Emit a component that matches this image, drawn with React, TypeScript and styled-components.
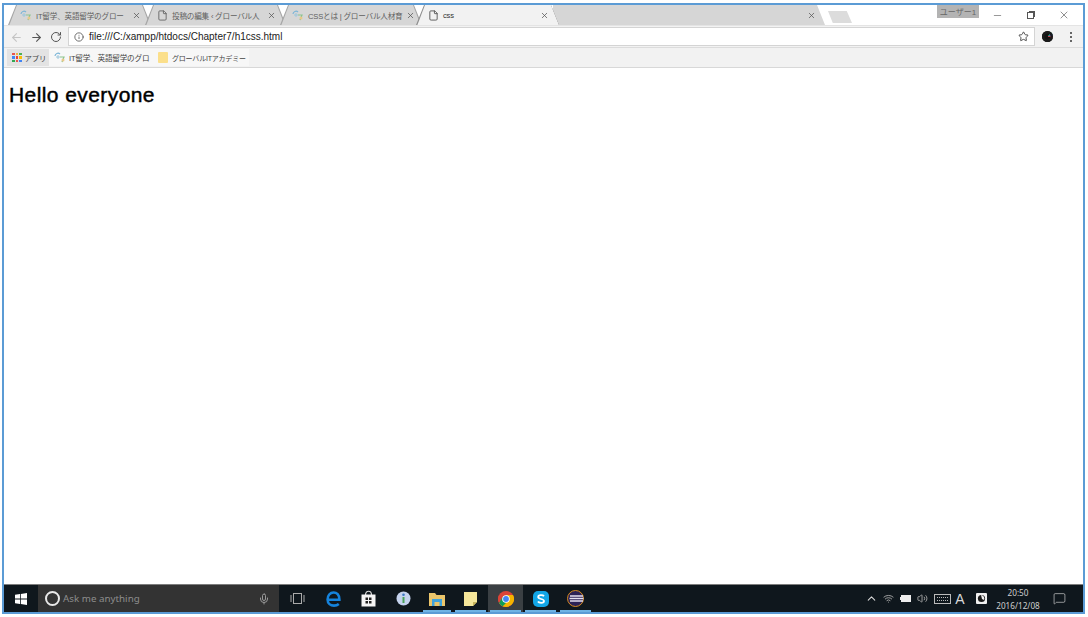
import React from 'react';
import styled, { createGlobalStyle } from 'styled-components';
import { ArrowLeft, ArrowRight, RotateCw, Info, Star, X, Minus, File, Mic, ChevronUp, Wifi, Volume2, MessageSquare } from 'lucide-react';

const Global = createGlobalStyle`
  html, body { margin: 0; padding: 0; background: #fff; }
  body { width: 1088px; height: 617px; overflow: hidden; font-family: "Liberation Sans", "Noto Sans CJK JP", sans-serif; }
`;

const Frame = styled.div`
  box-sizing: border-box;
  width: 1083px;
  height: 611px;
  margin: 3px 0 0 2px;
  border: 2px solid #5b9bd5;
  display: flex;
  flex-direction: column;
  background: #fff;
`;

const TabStrip = styled.div`
  height: 20px;
  flex: none;
  display: flex;
  align-items: flex-end;
  background: #fff;
  padding-left: 4px;
  position: relative;
`;

// outer shape gives the slanted edge line, ::before is the tab fill
const Tab = styled.div<{ $w: number; $active?: boolean }>`
  box-sizing: border-box;
  width: ${p => p.$w}px;
  height: 20px;
  margin-right: -6px;
  padding: 0 10px 0 12px;
  display: flex;
  align-items: center;
  gap: 4px;
  flex: none;
  background: ${p => (p.$active ? '#8f8f8f' : '#a6a6a6')};
  clip-path: polygon(0 100%, 8px 0, calc(100% - 8px) 0, 100% 100%);
  position: relative;
  z-index: ${p => (p.$active ? 2 : 1)};
  font-size: 7.6px;
  letter-spacing: -0.2px;
  color: ${p => (p.$active ? '#333' : '#5f5f5f')};
  &::before {
    content: '';
    position: absolute;
    inset: 0;
    background: ${p => (p.$active ? '#f2f2f2' : '#d6d6d6')};
    clip-path: ${p =>
      p.$active
        ? 'polygon(1.4px 100%, 9px 0, calc(100% - 8px) 0, 100% 100%)'
        : 'polygon(1.4px 100%, 9px 0, calc(100% - 9px) 0, calc(100% - 1.4px) 100%)'};
  }
  & > * {
    position: relative;
  }
`;

const TabTitle = styled.span`
  flex: 1;
  white-space: nowrap;
`;

const TabClose = styled(X)`
  flex: none;
  width: 9px;
  height: 9px;
  color: #555;
  stroke-width: 2;
`;

const BlankTab = styled.div`
  box-sizing: border-box;
  width: 272px;
  height: 20px;
  flex: none;
  background: #d6d6d6;
  clip-path: polygon(0 0, calc(100% - 8px) 0, 100% 100%, 0 100%);
  display: flex;
  align-items: center;
  justify-content: flex-end;
  padding-right: 9px;
`;

const NewTab = styled.div`
  width: 24px;
  height: 12px;
  flex: none;
  margin: 0 0 2px 3px;
  background: #dcdcdc;
  clip-path: polygon(0 0, 78% 0, 100% 100%, 20% 100%);
`;

const UserBadge = styled.div`
  position: absolute;
  left: 933px;
  top: 0;
  width: 42px;
  height: 13px;
  background: #b3b3b3;
  color: #666;
  font-size: 8px;
  display: flex;
  align-items: center;
  justify-content: center;
`;

const WindowControls = styled.div`
  display: flex;
  align-items: center;
  margin-left: auto;
  height: 20px;
  gap: 24px;
  padding-right: 13px;
  color: #444;
  align-self: flex-start;
`;

const Restore = styled.div`
  width: 5px;
  height: 5px;
  border: 1px solid #555;
  box-shadow: 1.5px -1.5px 0 -0.5px #555;
`;

const Toolbar = styled.div`
  height: 23px;
  flex: none;
  box-sizing: border-box;
  background: #f2f2f2;
  border-top: 1px solid #e4e4e4;
  border-bottom: 1px solid #dcdcdc;
  display: flex;
  align-items: flex-end;
  padding: 0 9px 1px 6px;
  color: #555;
`;

const NavSlot = styled.div<{ $w: number }>`
  width: ${p => p.$w}px;
  height: 18px;
  display: flex;
  flex: none;
  align-items: center;
`;

const Omnibox = styled.div`
  box-sizing: border-box;
  flex: 1;
  height: 19px;
  margin-left: 1px;
  background: #fff;
  border: 1px solid #d4d4d4;
  display: flex;
  align-items: center;
  padding: 0 5px;
  gap: 5px;
  font-size: 10px;
  color: #222;
`;

const OmniText = styled.span`
  flex: 1;
`;

const ProfileDot = styled.div`
  width: 11px;
  height: 11px;
  border-radius: 50%;
  margin: 0 17px 4px 7px;
  flex: none;
  background: conic-gradient(#111 0 8%, #2a7 14%, #36c 20%, #d33 26%, #111 32%);
  box-shadow: inset 0 0 0 2.5px #1a1a1a;
`;

const Kebab = styled.div`
  width: 2px;
  height: 2px;
  margin: 0 2px 8px 0;
  background: #666;
  box-shadow: 0 -4px 0 #666, 0 4px 0 #666;
`;

const BookmarkBar = styled.div`
  height: 20px;
  flex: none;
  box-sizing: border-box;
  background: #f2f2f2;
  border-bottom: 1px solid #d8d8d8;
  display: flex;
  align-items: center;
  padding-left: 3px;
  color: #444;
`;

const Bookmark = styled.div<{ $w: number; $size: number; $tint?: boolean }>`
  box-sizing: border-box;
  width: ${p => p.$w}px;
  height: 17px;
  display: flex;
  flex: none;
  align-items: center;
  gap: 3px;
  padding-left: 5px;
  white-space: nowrap;
  font-size: ${p => p.$size}px;
  letter-spacing: -0.2px;
  background: ${p => (p.$tint ? '#e3e3e3' : '#f7f7f7')};
`;

const AppsGrid = styled.div`
  display: grid;
  grid-template-columns: repeat(3, 2.5px);
  gap: 1px;
  flex: none;
`;

const AppsCell = styled.i<{ $c: string }>`
  display: block;
  width: 2.5px;
  height: 2.5px;
  background: ${p => p.$c};
`;

const Folder = styled.div`
  width: 10px;
  height: 11px;
  margin-right: 1px;
  flex: none;
  background: #fbdf8b;
  border-radius: 1px;
`;

const Content = styled.main`
  flex: 1;
  padding: 15px 0 0 5px;
  background: #fff;
`;

const Heading = styled.h1`
  margin: 0;
  font-size: 21px;
  line-height: 24px;
  font-weight: 400;
  letter-spacing: 0.42px;
  color: #000;
  -webkit-text-stroke: 0.45px #000;
`;

const Taskbar = styled.footer`
  height: 28px;
  flex: none;
  background: #0f171d;
  display: flex;
  align-items: center;
  border-top: 1px solid #7d7d7d;
  box-sizing: border-box;
`;

const StartSlot = styled.div`
  width: 34px;
  flex: none;
  display: flex;
  justify-content: center;
`;

const SearchBox = styled.div`
  box-sizing: border-box;
  width: 241px;
  height: 27px;
  flex: none;
  background: #333333;
  display: flex;
  align-items: center;
  padding: 0 9px 0 7px;
  gap: 3px;
  color: #8d8d8d;
  font-size: 9.8px;
  font-family: "Noto Sans", sans-serif;
`;

const Cortana = styled.div`
  width: 11px;
  height: 11px;
  border: 2px solid #e8e8e8;
  border-radius: 50%;
  flex: none;
`;

const SearchText = styled.span`
  flex: 1;
`;

const TaskIcons = styled.div`
  display: flex;
  height: 27px;
`;

const TaskItem = styled.div<{ $w: number; $open?: boolean; $active?: boolean }>`
  box-sizing: border-box;
  width: ${p => p.$w}px;
  height: 27px;
  flex: none;
  display: flex;
  align-items: center;
  justify-content: center;
  background: ${p => (p.$active ? '#3a3f43' : 'transparent')};
  position: relative;
  &::after {
    content: '';
    display: ${p => (p.$open ? 'block' : 'none')};
    position: absolute;
    left: 2px;
    right: 2px;
    bottom: 0;
    height: 2px;
    background: #6fb3e4;
  }
`;

const Tray = styled.div`
  margin-left: auto;
  display: flex;
  align-items: center;
  height: 27px;
  padding-right: 6px;
  color: #d8d8d8;
`;

const TrayItem = styled.div<{ $w: number }>`
  width: ${p => p.$w}px;
  display: flex;
  flex: none;
  align-items: center;
  justify-content: center;
  font-size: 14px;
`;

const Clock = styled.div`
  width: 48px;
  flex: none;
  text-align: center;
  font-size: 8.2px;
  line-height: 13px;
  white-space: nowrap;
  color: #cfcfcf;
  font-family: "Noto Sans", sans-serif;
`;

const Favicon = () => (
  <svg width="12" height="11" viewBox="0 0 12 11" fill="none" style={{ flex: 'none' }}>
    <path d="M1 4 A3 3 0 0 1 6 2" stroke="#7db6d8" strokeWidth="1.2" />
    <path d="M4 3 L4 7 M2 5 H6" stroke="#9cc6dc" strokeWidth="1" />
    <path d="M6 5 L10 5 L8 10" stroke="#8cc48e" strokeWidth="1.2" />
    <circle cx="9" cy="8" r="1.5" fill="#e8c98a" />
  </svg>
);

const APP_COLORS = ['#e8554e', '#f2b33d', '#4caf50', '#4285f4', '#ea4335', '#fbbc05', '#34a853', '#e8554e', '#4285f4'];

const tabs = [
  { w: 143, title: 'IT留学、英語留学のグロー', icon: 'globe' },
  { w: 141, title: '投稿の編集 ‹ グローバル人', icon: 'file' },
  { w: 142, title: 'CSSとは | グローバル人材育', icon: 'globe' },
];

export default function App() {
  return (
    <>
      <Global />
      <Frame>
        <TabStrip>
          {tabs.map(t => (
            <Tab key={t.title} $w={t.w}>
              {t.icon === 'globe' ? <Favicon /> : <File size={11} color="#666" />}
              <TabTitle>{t.title}</TabTitle>
              <TabClose />
            </Tab>
          ))}
          <Tab $w={143} $active>
            <File size={11} color="#555" />
            <TabTitle>css</TabTitle>
            <TabClose />
          </Tab>
          <BlankTab>
            <TabClose />
          </BlankTab>
          <NewTab />
          <UserBadge>ユーザー1</UserBadge>
          <WindowControls>
            <Minus size={11} strokeWidth={1.2} />
            <Restore />
            <X size={12} strokeWidth={1.2} />
          </WindowControls>
        </TabStrip>
        <Toolbar>
          <NavSlot $w={20}><ArrowLeft size={13} color="#c4c4c4" /></NavSlot>
          <NavSlot $w={20}><ArrowRight size={13} color="#555" /></NavSlot>
          <NavSlot $w={17}><RotateCw size={12} color="#555" /></NavSlot>
          <Omnibox>
            <Info size={10} color="#555" />
            <OmniText>file:///C:/xampp/htdocs/Chapter7/h1css.html</OmniText>
            <Star size={11} color="#444" />
          </Omnibox>
          <ProfileDot />
          <Kebab />
        </Toolbar>
        <BookmarkBar>
          <Bookmark $w={42} $size={7.4} $tint>
            <AppsGrid>
              {APP_COLORS.map((c, i) => <AppsCell key={i} $c={c} />)}
            </AppsGrid>
            アプリ
          </Bookmark>
          <Bookmark $w={104} $size={7.6}><Favicon />IT留学、英語留学のグロ</Bookmark>
          <Bookmark $w={96} $size={7}><Folder />グローバルITアカデミー</Bookmark>
        </BookmarkBar>
        <Content>
          <Heading>Hello everyone</Heading>
        </Content>
        <Taskbar>
          <StartSlot>
            <svg width="12" height="12" viewBox="0 0 12 12" fill="#fff">
              <path d="M0 1.7 L5 1 V5.6 H0 Z M5.8 0.9 L12 0 V5.6 H5.8 Z M0 6.4 H5 V11 L0 10.3 Z M5.8 6.4 H12 V12 L5.8 11.1 Z" />
            </svg>
          </StartSlot>
          <SearchBox>
            <Cortana />
            <SearchText>Ask me anything</SearchText>
            <Mic size={12} color="#999" />
          </SearchBox>
          <TaskIcons>
            <TaskItem $w={36}>
              <svg width="15" height="11" viewBox="0 0 15 11" fill="none" stroke="#aaa">
                <rect x="3.5" y="0.5" width="8" height="10" />
                <path d="M1 2 V9 M14 2 V9" />
              </svg>
            </TaskItem>
            <TaskItem $w={36}>
              <svg width="15" height="16" viewBox="0 0 15 16" fill="none" stroke="#1583dc" strokeWidth="2.6">
                <path d="M1.8 8.8 H13.4 C13.6 3.5 10.5 1.5 7.6 1.5 C4 1.5 1.6 4.6 1.6 8.4 C1.6 12.5 4.6 14.6 8 14.6 C10 14.6 11.6 14 12.8 13" />
              </svg>
            </TaskItem>
            <TaskItem $w={34}>
              <svg width="15" height="17" viewBox="0 0 15 17">
                <path d="M4.5 5 C4.5 0 10.5 0 10.5 5" fill="none" stroke="#ddd" strokeWidth="1.2" />
                <path d="M0.5 4.5 H14.5 V16.5 H0.5 Z" fill="#f5f5f5" />
                <path d="M4.5 7.5 H7 V10 H4.5 Z M8 7.5 H10.5 V10 H8 Z M4.5 11 H7 V13.5 H4.5 Z M8 11 H10.5 V13.5 H8 Z" fill="#222" />
              </svg>
            </TaskItem>
            <TaskItem $w={36}>
              <svg width="15" height="15" viewBox="0 0 15 15">
                <circle cx="7.5" cy="7.5" r="7" fill="#c5d3ee" />
                <circle cx="7.5" cy="3.8" r="1.3" fill="#3d78c4" />
                <rect x="6.5" y="6" width="2" height="6" fill="#4aa35a" />
              </svg>
            </TaskItem>
            <TaskItem $w={32} $open>
              <svg width="16" height="14" viewBox="0 0 16 14">
                <path d="M0 1 H6 L7.5 3 H16 V14 H0 Z" fill="#eac56b" />
                <path d="M3 7 H13 V14 H10.5 V10 H5.5 V14 H3 Z" fill="#3fa3dc" />
              </svg>
            </TaskItem>
            <TaskItem $w={35} $open>
              <svg width="13" height="14" viewBox="0 0 13 14">
                <path d="M0 0 H13 V10 L9 14 H0 Z" fill="#f5e69a" />
                <path d="M13 10 L9 14 V10 Z" fill="#c8b45a" />
              </svg>
            </TaskItem>
            <TaskItem $w={35} $open $active>
              <svg width="16" height="16" viewBox="0 0 16 16">
                <circle cx="8" cy="8" r="8" fill="#db4437" />
                <path d="M8 8 L1.1 12 A8 8 0 0 0 8 16 A8 8 0 0 0 15 4 L8 4 Z" fill="#f4b400" />
                <path d="M8 8 L1.1 12 A8 8 0 0 1 1.1 4 L4.5 6 Z" fill="#db4437" />
                <path d="M1.1 12 L4.5 6 L8 12 L4.7 15.3 A8 8 0 0 1 1.1 12 Z" fill="#0f9d58" />
                <circle cx="8" cy="8" r="3.8" fill="#fff" />
                <circle cx="8" cy="8" r="2.9" fill="#4285f4" />
              </svg>
            </TaskItem>
            <TaskItem $w={35} $open>
              <svg width="16" height="16" viewBox="0 0 16 16">
                <rect width="16" height="16" rx="5" fill="#12a5e6" />
                <path d="M11 5.2 C10 3.8 5.2 3.6 5.2 6 C5.2 8.6 11 7.4 11 10 C11 12.4 6 12.2 4.9 10.6" fill="none" stroke="#fff" strokeWidth="1.8" />
              </svg>
            </TaskItem>
            <TaskItem $w={35} $open>
              <svg width="17" height="17" viewBox="0 0 17 17">
                <circle cx="8.5" cy="8.5" r="8" fill="#2c2255" stroke="#d68a1e" strokeWidth="1" />
                <path d="M3 6 H16 M2.5 8.5 H16.5 M3 11 H16" stroke="#e4e0f0" strokeWidth="1.4" />
              </svg>
            </TaskItem>
          </TaskIcons>
          <Tray>
            <TrayItem $w={14}><ChevronUp size={13} /></TrayItem>
            <TrayItem $w={20}><Wifi size={11} color="#aaa" /></TrayItem>
            <TrayItem $w={14}>
              <svg width="11" height="7" viewBox="0 0 11 7"><rect x="1" width="10" height="7" fill="#eee" /><rect y="2" width="1" height="3" fill="#eee" /></svg>
            </TrayItem>
            <TrayItem $w={20}><Volume2 size={11} color="#aaa" /></TrayItem>
            <TrayItem $w={20}>
              <svg width="17" height="10" viewBox="0 0 17 10" fill="none" stroke="#bbb">
                <rect x="0.5" y="0.5" width="16" height="9" />
                <path d="M3 3.5 H14 M3 6.5 H14" strokeDasharray="1 1" />
              </svg>
            </TrayItem>
            <TrayItem $w={16}>A</TrayItem>
            <TrayItem $w={26}>
              <svg width="11" height="11" viewBox="0 0 11 11">
                <rect width="11" height="11" rx="1" fill="#f0f0f0" />
                <circle cx="5.5" cy="5.5" r="3.6" fill="#1a1a1a" />
                <path d="M5 2 A3.5 3.5 0 0 1 8 7 L6 6 Z" fill="#f0f0f0" />
              </svg>
            </TrayItem>
            <Clock>20:50<br />2016/12/08</Clock>
            <TrayItem $w={35}><MessageSquare size={13} strokeWidth={1.2} /></TrayItem>
          </Tray>
        </Taskbar>
      </Frame>
    </>
  );
}
